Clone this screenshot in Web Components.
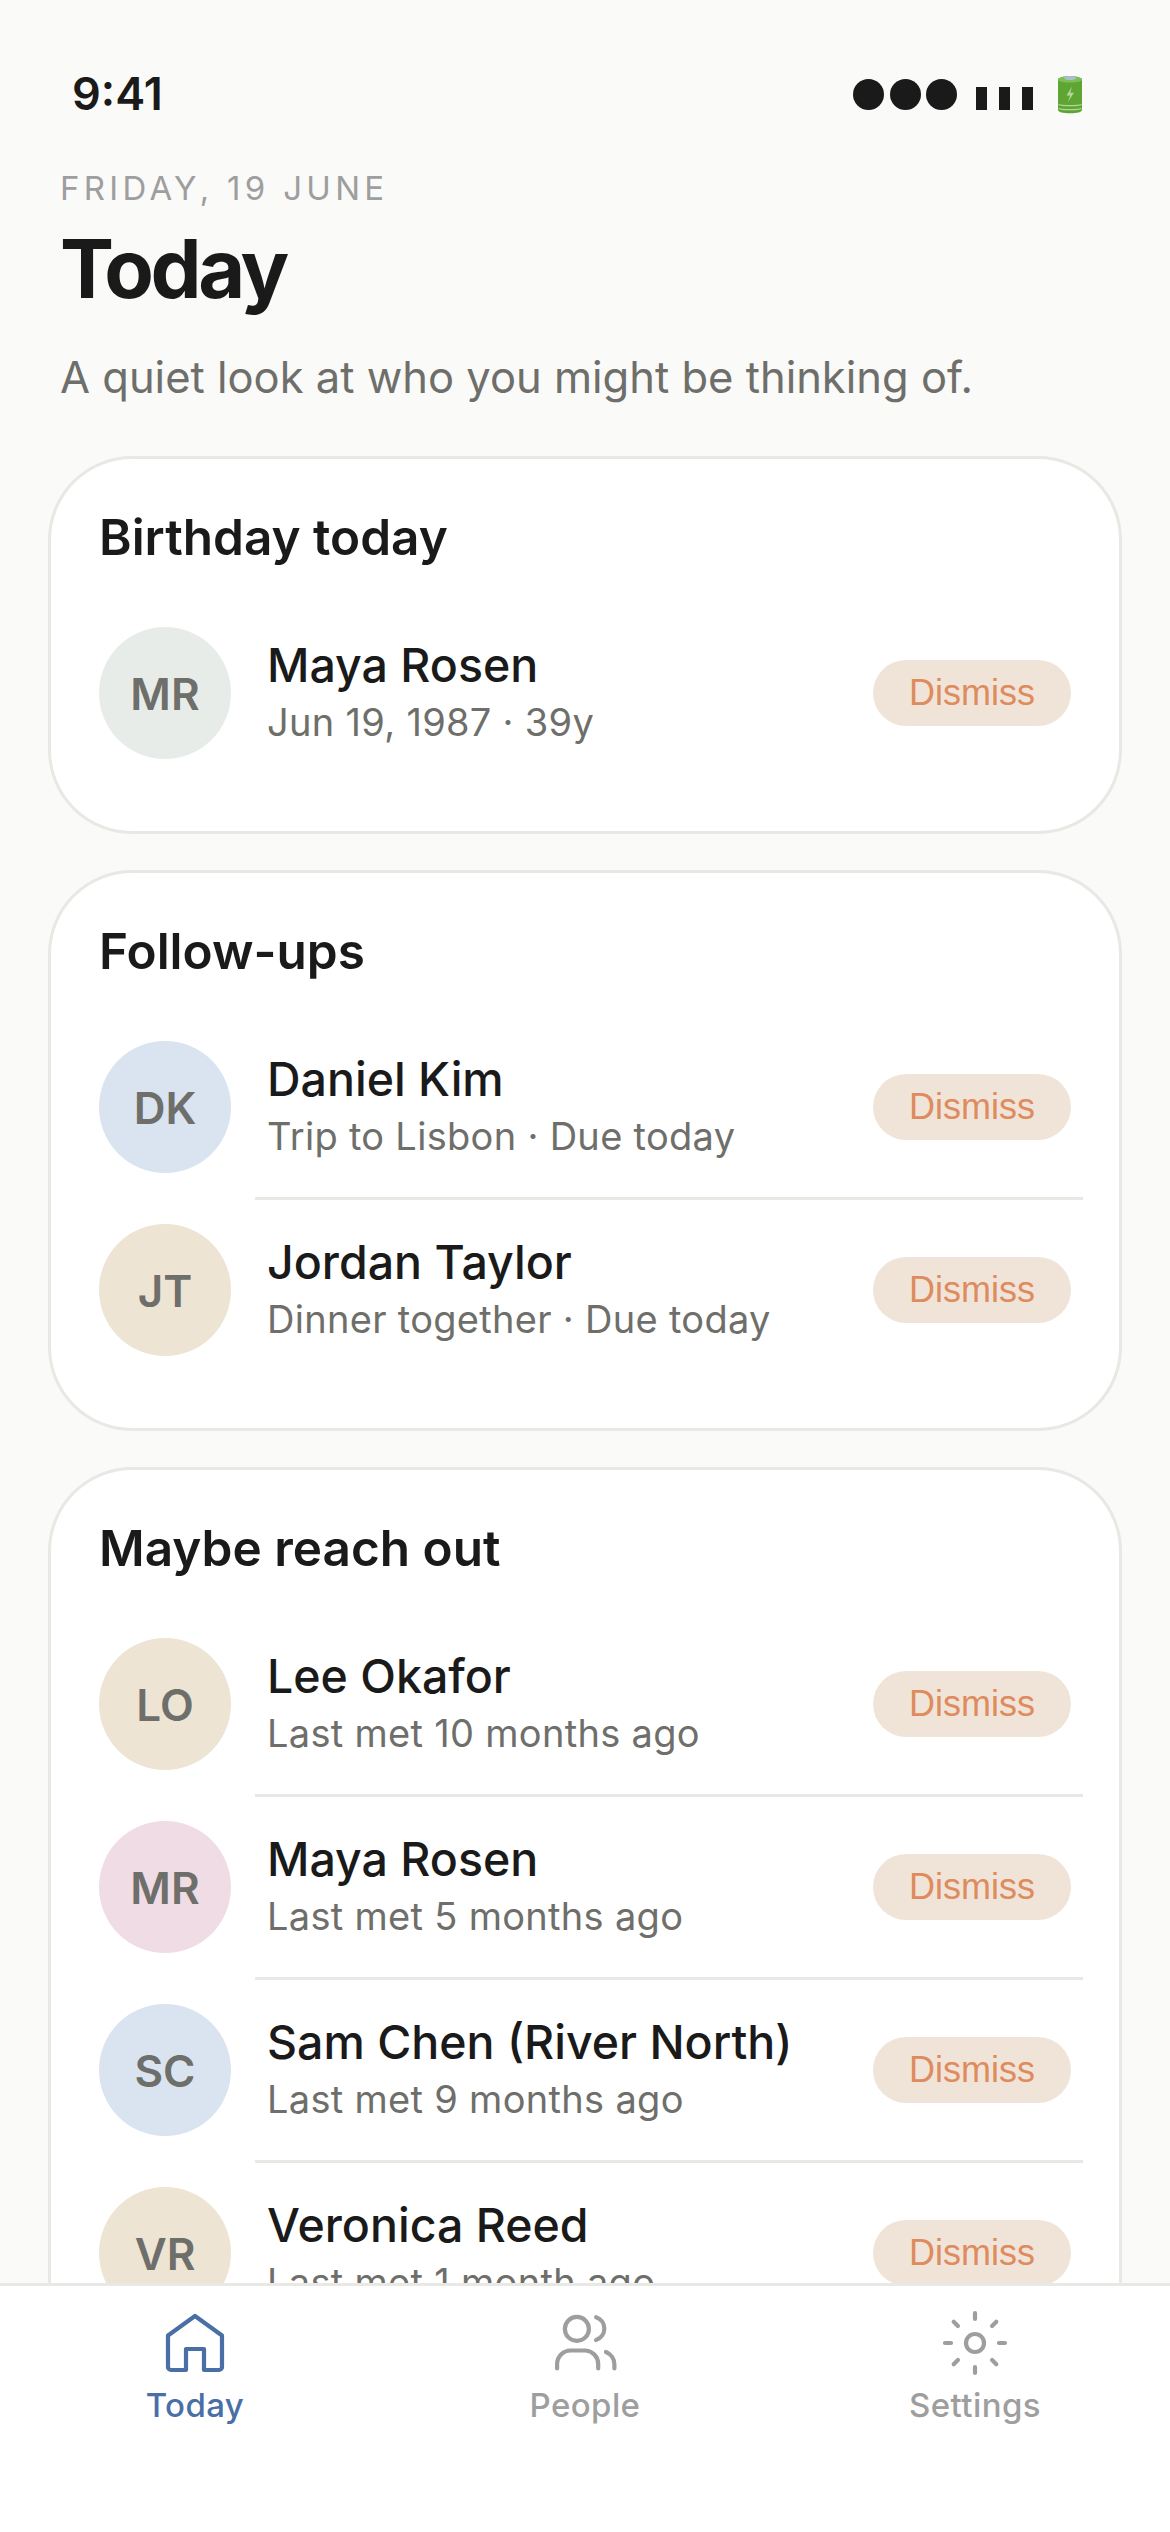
<!doctype html>
<html><head><meta charset="utf-8"><style>
html,body{margin:0;height:100%;background:#FAFAF8;overflow:hidden}
body{font-family:Inter,"Noto Sans",sans-serif;color:#1A1A1A}
app-shell{height:2532px}
</style></head><body>
<app-shell>
  <status-bar></status-bar>
  <page-header date="FRIDAY, 19 JUNE" title="Today" sub="A quiet look at who you might be thinking of."></page-header>
  <section-card heading="Birthday today">
    <person-row initials="MR" color="#E8ECE8" name="Maya Rosen" sub="Jun 19, 1987 · 39y"></person-row>
  </section-card>
  <section-card heading="Follow-ups">
    <person-row initials="DK" color="#D9E4F0" name="Daniel Kim" sub="Trip to Lisbon · Due today"></person-row>
    <person-row initials="JT" color="#EDE4D3" name="Jordan Taylor" sub="Dinner together · Due today"></person-row>
  </section-card>
  <section-card heading="Maybe reach out">
    <person-row initials="LO" color="#EDE4D3" name="Lee Okafor" sub="Last met 10 months ago"></person-row>
    <person-row initials="MR" color="#F0DCE4" name="Maya Rosen" sub="Last met 5 months ago"></person-row>
    <person-row initials="SC" color="#D9E4F0" name="Sam Chen (River North)" sub="Last met 9 months ago"></person-row>
    <person-row initials="VR" color="#EDE4D3" name="Veronica Reed" sub="Last met 1 month ago"></person-row>
  </section-card>
  <tab-bar slot="tabs">
    <tab-item label="Today" icon="home" active></tab-item>
    <tab-item label="People" icon="people"></tab-item>
    <tab-item label="Settings" icon="sun"></tab-item>
  </tab-bar>
</app-shell>
<script>
function def(name, css, html){
  customElements.define(name, class extends HTMLElement{
    constructor(){super();this.attachShadow({mode:'open'});}
    connectedCallback(){
      const a=n=>this.getAttribute(n)||'';
      this.shadowRoot.innerHTML='<style>'+css+'</style>'+html(a,this);
    }
  });
}
def('app-shell',`
:host{display:flex;flex-direction:column;overflow:hidden}
main{flex:1;min-height:0;overflow:hidden;display:flex;flex-direction:column}
`,()=>`<main><slot></slot></main><slot name="tabs"></slot>`);

def('status-bar',`
:host{display:flex;justify-content:space-between;align-items:center;height:48px;padding:70px 87.5px 0 72px;flex:none}
.t{font-size:45px;font-weight:600;color:#1A1A1A;line-height:48px}
.r{display:flex;align-items:center;line-height:48px}
.d{display:flex;gap:5.5px;margin-right:18.7px}.d i{width:31px;height:31px;border-radius:50%;background:#1A1A1A}
.b{display:flex;gap:12.3px;margin-right:23.2px}.b i{width:11px;height:23px;background:#1A1A1A;margin-top:8px}
svg{width:26px;height:39px;display:block}
`,()=>`<span class="t">9:41</span><span class="r"><span class="d"><i></i><i></i><i></i></span><span class="b"><i></i><i></i><i></i></span>
<svg viewBox="0 0 26 39" role="img" aria-label="battery">
<path d="M1 4.5C1 2.5 6 1.2 13 1.2s12 1.3 12 3.3V35c0 2-5 3.3-12 3.3S1 37 1 35z" fill="#5FA534"/>
<path d="M1 4.5C1 2.5 6 1.2 13 1.2s12 1.3 12 3.3-5 3-12 3-12-1-12-3z" fill="#7FBF5A"/>
<ellipse cx="13" cy="3" rx="6" ry="2" fill="#A9BFD0"/>
<path d="M15 11.5 9.5 20.5h3.6l-2.2 6.5 6-9.3h-3.7z" fill="#B4D69A"/>
<path d="M1.5 29.5c3 1.6 20 1.6 23 0M1.5 33.5c3 1.6 20 1.6 23 0" fill="none" stroke="#B4D69A" stroke-width="1.2"/>
</svg></span>`);

def('page-header',`
:host{display:block;flex:none;padding:50px 60px 49px}
.d{font-size:33px;letter-spacing:4.3px;color:#9E9E9E;line-height:40px}
h1{margin:11px 0 0;font-size:81px;font-weight:700;letter-spacing:-3.4px;line-height:100px;color:#1A1A1A}
p{margin:28px 0 0;font-size:43.5px;color:#6E6E6A;line-height:60px}
`,a=>`<div class="d">${a('date')}</div><h1>${a('title')}</h1><p>${a('sub')}</p>`);

def('section-card',`
:host{display:block;flex:none;margin:0 48px 36px;background:#fff;border:3px solid #E8E8E4;border-radius:84px;padding:36px 36px 48px}
h2{margin:0;padding:12px 12px 0;font-size:49.5px;font-weight:600;line-height:60px;color:#1A1A1A}
.l{margin-top:36px}
`,a=>`<h2>${a('heading')}</h2><div class="l"><slot></slot></div>`);

def('person-row',`
:host{display:block}
.o{display:flex;align-items:center;padding:24px 12px;gap:36px}
.a{width:132px;height:132px;box-sizing:border-box;padding-top:2px;border-radius:50%;display:flex;align-items:center;justify-content:center;font-size:44px;font-weight:600;color:#6E6E6A;flex:none}
.m{flex:1;min-width:0;padding-bottom:4px}
.n{font-size:46.5px;line-height:60px;color:#1A1A1A;font-weight:500;margin-bottom:2px}
.s{font-size:38px;letter-spacing:.3px;line-height:50px;color:#6E6E6A}
.x{flex:none;width:198px;height:66px;border-radius:33px;background:#F0E4D9;color:#DE8B5E;font:36px "Liberation Sans",Arial,sans-serif;display:flex;align-items:center;justify-content:center}
.r{height:3px;background:#E8E8E4;margin-left:168px}
:host(:last-child) .r{display:none}
`,a=>`<div class="o"><div class="a" style="background:${a('color')}">${a('initials')}</div><div class="m"><div class="n">${a('name')}</div><div class="s">${a('sub')}</div></div><div class="x">Dismiss</div></div><div class="r"></div>`);

def('tab-bar',`
:host{display:grid;grid-template-columns:repeat(3,1fr);height:225px;flex:none;background:#fff;border-top:3px solid #E8E8E4;padding-top:21px}
`,()=>`<slot></slot>`);

const ICONS={
 home:`<path d="M3 9.5 12 3l9 6.5V20a1 1 0 0 1-1 1h-5v-7H9v7H4a1 1 0 0 1-1-1z"/>`,
 people:`<circle cx="9.3" cy="7.3" r="4"/><path d="M2.7 20.5V19a4.5 4.5 0 0 1 4.5-4.5h5a4.5 4.5 0 0 1 4.2 4.5v1.5"/><path d="M15.7 3.4a4 4 0 0 1 0 7.6"/><path d="M19 15a4.5 4.5 0 0 1 2.8 4.2v1.3"/>`,
 sun:`<circle cx="12" cy="12" r="3"/><path d="M12 2v2M12 20v2M4.9 4.9l1.4 1.4M17.7 17.7l1.4 1.4M2 12h2M20 12h2M4.9 19.1l1.4-1.4M17.7 6.3l1.4-1.4"/>`
};
def('tab-item',`
:host{display:flex;flex-direction:column;align-items:center;color:#9E9E9E}
:host([active]){color:#4A6FA5}
svg{width:72px;height:72px;fill:none;stroke:currentColor;stroke-width:1.4;stroke-linecap:round;stroke-linejoin:round;display:block}
span{font-size:33px;font-weight:500;letter-spacing:.4px;line-height:40px;margin-top:6px}
`,a=>`<svg viewBox="0 0 24 24">${ICONS[a('icon')]}</svg><span>${a('label')}</span>`);
</script>
</body></html>
